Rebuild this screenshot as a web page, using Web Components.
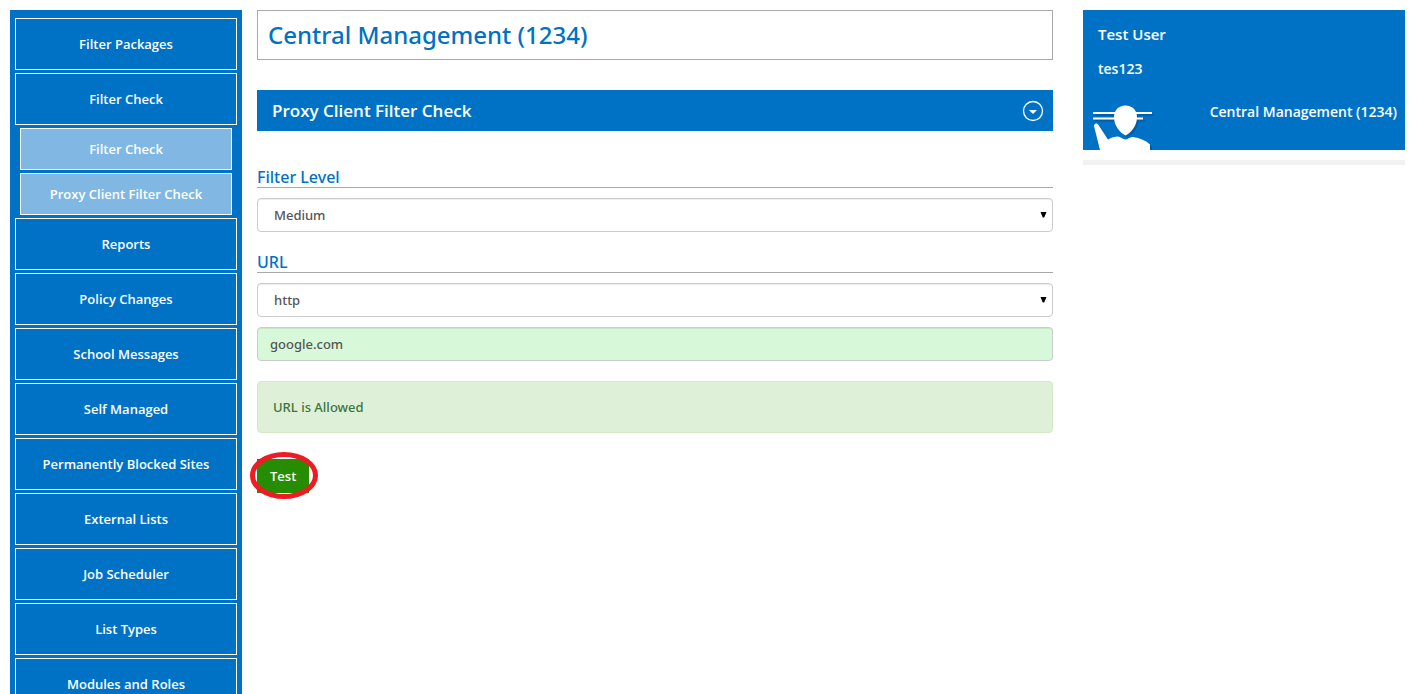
<!DOCTYPE html>
<html lang="en">
<head>
<meta charset="utf-8">
<meta name="viewport" content="width=device-width, initial-scale=1">
<title>Central Management</title>
<style>
  html, body { margin: 0; }
  body {
    --blue: #0072c6;
    --line: #a9a9a9;
    --medium: "Noto Sans", "Open Sans", sans-serif;
    background: #fff;
    color: #555;
    font: 600 13px/20px "Open Sans", "Noto Sans", sans-serif;
  }
</style>
</head>
<body>
<filter-app></filter-app>

<script>
const define = (name, html, setup) => {
  const template = document.createElement('template');
  template.innerHTML = '<style>*{box-sizing:border-box}</style>' + html;
  customElements.define(name, class extends HTMLElement {
    constructor() {
      super();
      this.attachShadow({ mode: 'open' }).append(template.content.cloneNode(true));
      if (setup) setup(this, this.shadowRoot);
    }
  });
};

define('nav-item', `
  <style>
    :host { display: block; }
    a {
      display: flex; align-items: center; justify-content: center;
      height: 52px; border: 1px solid #fff;
      color: #fff; text-decoration: none; text-align: center;
    }
    :host([sub]) { padding: 0 5px; }
    :host([sub]) a { height: 42px; background: #80b8e3; }
  </style>
  <a href="#"><slot></slot></a>`);

define('side-nav', `
  <style>
    :host { display: block; background: var(--blue); padding: 8px 5px; overflow-y: auto; scrollbar-width: none; }
    nav { display: flex; flex-direction: column; gap: 3px; }
  </style>
  <nav aria-label="Main"><slot></slot></nav>`);

define('page-title', `
  <style>
    :host { display: block; border: 1px solid var(--line); padding: 0 10px; }
    h1 { margin: 0; color: var(--blue); font: 500 24px/48px var(--medium); }
  </style>
  <h1><slot></slot></h1>`);

define('panel-header', `
  <style>
    :host {
      display: flex; align-items: center; justify-content: space-between;
      background: var(--blue); padding: 0 9px 0 15px;
    }
    h2 { margin: 0; color: #fff; font-size: 17px; line-height: 41px; font-weight: 600; }
    button { display: block; padding: 0; border: 0; background: none; }
    svg { display: block; }
  </style>
  <h2><slot></slot></h2>
  <button type="button" aria-label="Collapse panel">
    <svg width="22" height="22" viewBox="0 0 22 22">
      <circle cx="11" cy="11" r="9.5" fill="none" stroke="#fff" stroke-width="1.3"/>
      <path d="M7 10h8l-4 4z" fill="#fff"/>
    </svg>
  </button>`);

define('filter-form', `
  <style>
    :host { display: block; }
    form { display: flex; flex-direction: column; font: 500 13px/20px var(--medium); }
    label {
      color: var(--blue); font-size: 16px; line-height: 20px;
      border-bottom: 1px solid var(--line); margin-bottom: 10px;
    }
    .pick { display: grid; align-items: center; margin-bottom: 20px; }
    .pick.tight { margin-bottom: 10px; }
    .pick > * { grid-area: 1 / 1; }
    .pick svg { justify-self: end; margin-right: 6px; pointer-events: none; }
    select, input {
      width: 100%; height: 34px; margin: 0;
      border: 1px solid #ccc; border-radius: 4px;
      box-shadow: inset 0 1px 1px rgba(0, 0, 0, .075);
      background: #fff; color: #555; font: inherit; line-height: 20px; appearance: none;
    }
    select { padding: 0 16px; }
    input { padding: 0 12px; background: #d8f8da; margin-bottom: 20px; }
    output {
      display: block; padding: 15px; margin-bottom: 26px;
      border: 1px solid #d6e9c6; border-radius: 4px; background: #dff0d8; color: #3c763d;
    }
    .action { position: relative; align-self: flex-start; }
    .action button {
      display: block; height: 34px; padding: 0 13px; border: 0;
      background: #268d00; color: #fff; font: 600 13px/20px "Open Sans", sans-serif;
    }
    .ring { position: absolute; left: -7px; top: -7px; pointer-events: none; }
  </style>
  <form>
    <label for="level">Filter Level</label>
    <div class="pick">
      <select id="level"><option>Medium</option></select>
      <svg width="7" height="8" viewBox="0 0 7 8"><path d="M0.500 1h6L4.200 6.500H2.800z"/></svg>
    </div>
    <label for="scheme">URL</label>
    <div class="pick tight">
      <select id="scheme"><option>http</option></select>
      <svg width="7" height="8" viewBox="0 0 7 8"><path d="M0.500 1h6L4.200 6.500H2.800z"/></svg>
    </div>
    <input type="text" value="google.com" aria-label="Address">
    <output>URL is Allowed</output>
    <div class="action">
      <button type="button">Test</button>
      <svg class="ring" width="68" height="47" viewBox="0 0 68 47">
        <ellipse cx="34" cy="23.500" rx="31.500" ry="21" fill="none" stroke="#ed1c24" stroke-width="5"/>
      </svg>
    </div>
  </form>`);

define('user-card', `
  <style>
    :host { display: block; }
    .card { background: var(--blue); color: #fff; padding: 14px 8px 0 15px; font-size: 14px; }
    h2 { margin: 0 0 15px; font-size: 15px; line-height: 20px; font-weight: 600; }
    p { margin: 0; }
    .row { display: flex; justify-content: space-between; margin: 16px 0 0 -5px; }
    .row p { padding-top: 7px; }
    svg { display: block; flex: none; }
    hr { height: 5px; margin: 10px 0 0; border: 0; background: #f2f2f2; }
  </style>
  <div class="card">
    <h2><slot name="name"></slot></h2>
    <p><slot name="login"></slot></p>
    <div class="row">
      <svg width="66" height="55" viewBox="0 0 66 55" aria-hidden="true">
        <defs>
          <g id="person">
            <path d="M0 17h59v2H0zM0 22.500h50v2H0z"/>
            <path d="M32.500 10.500c7 0 11.500 5 11.500 11.500 0 8.500-6 16-11.500 18.500C27 38 21 30.500 21 22c0-6.500 4.500-11.500 11.500-11.500z"/>
            <path d="M1 31c0-3 3-3.500 4.500-1L15 44.500c3-2 7-3 10-3 2 0 5 3 7.500 3s4.500-3 7.500-2.500c7 1 13 3.500 17 7.500V55H7z"/>
          </g>
        </defs>
        <use href="#person" x="2" y="2" fill="#00569f" opacity=".7"/>
        <use href="#person" fill="#fff"/>
      </svg>
      <p><slot name="site"></slot></p>
    </div>
  </div>
  <hr>`);

define('filter-app', `
  <style>
    :host {
      display: grid; grid-template-columns: 232px minmax(0, 1fr) 322px;
      height: 100vh; padding: 10px 14px 0 10px; box-sizing: border-box;
    }
    main { padding: 0 30px 0 15px; }
    page-title { margin-bottom: 30px; }
    panel-header { margin-bottom: 36px; }
  </style>
  <side-nav>
    <nav-item>Filter Packages</nav-item>
    <nav-item>Filter Check</nav-item>
    <nav-item sub>Filter Check</nav-item>
    <nav-item sub>Proxy Client Filter Check</nav-item>
    <nav-item>Reports</nav-item>
    <nav-item>Policy Changes</nav-item>
    <nav-item>School Messages</nav-item>
    <nav-item>Self Managed</nav-item>
    <nav-item>Permanently Blocked Sites</nav-item>
    <nav-item>External Lists</nav-item>
    <nav-item>Job Scheduler</nav-item>
    <nav-item>List Types</nav-item>
    <nav-item>Modules and Roles</nav-item>
  </side-nav>
  <main>
    <page-title>Central Management (1234)</page-title>
    <panel-header>Proxy Client Filter Check</panel-header>
    <filter-form></filter-form>
  </main>
  <user-card>
    <span slot="name">Test User</span>
    <span slot="login">tes123</span>
    <span slot="site">Central Management (1234)</span>
  </user-card>`);
</script>
</body>
</html>
